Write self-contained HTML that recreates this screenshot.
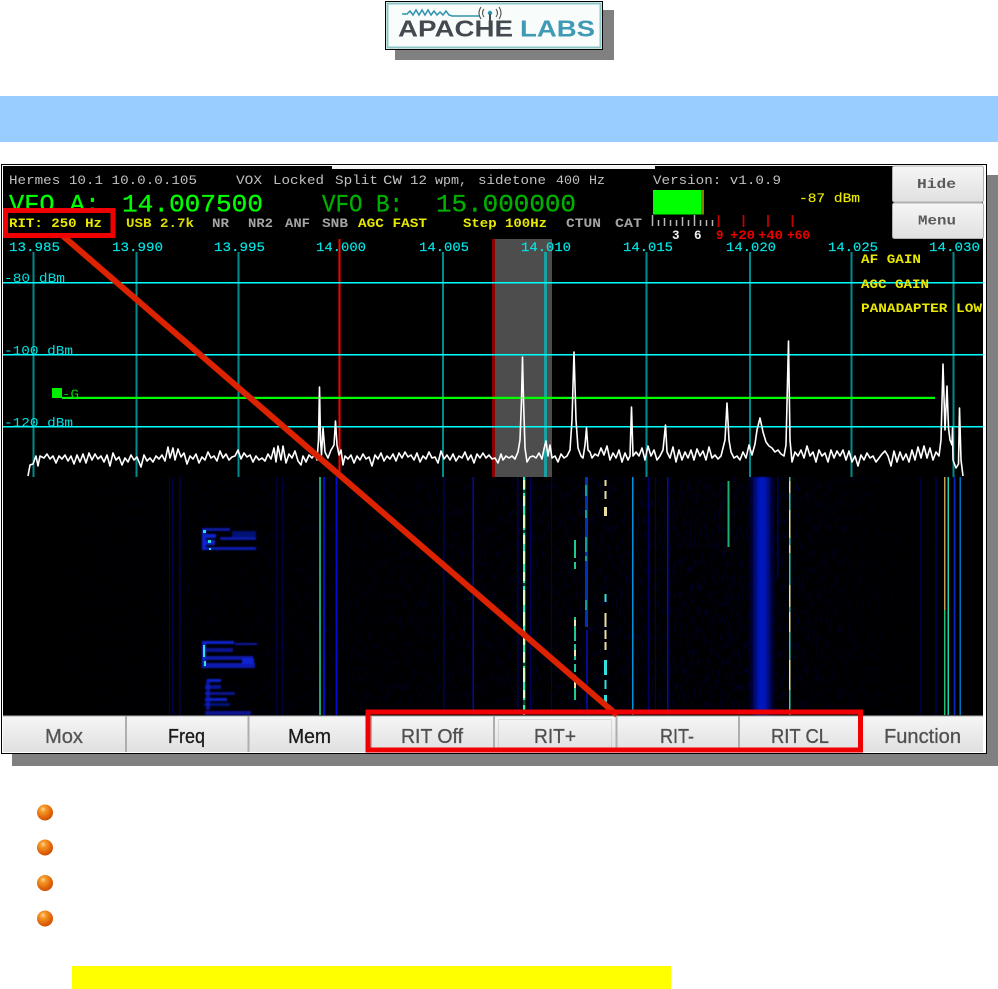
<!DOCTYPE html>
<html lang="en"><head><meta charset="utf-8"><title>RIT</title>
<style>
html,body{margin:0;padding:0;background:#fff;width:998px;height:989px;overflow:hidden}
svg{display:block}
.m{font-family:"Liberation Mono",monospace}
.b{font-weight:bold}
.s{font-family:"Liberation Sans",sans-serif}
</style></head><body>
<svg width="998" height="989" viewBox="0 0 998 989" xmlns="http://www.w3.org/2000/svg">
<defs>
<linearGradient id="btn" x1="0" y1="0" x2="0" y2="1"><stop offset="0" stop-color="#f6f6f6"/><stop offset="1" stop-color="#e0e0e0"/></linearGradient>
<radialGradient id="ball" cx=".38" cy=".3" r=".8"><stop offset="0" stop-color="#ffd8a0"/><stop offset=".22" stop-color="#f59a28"/><stop offset=".65" stop-color="#e26408"/><stop offset="1" stop-color="#bf4400"/></radialGradient>
<linearGradient id="wband" x1="0" y1="0" x2="1" y2="0"><stop offset="0" stop-color="#000050" stop-opacity="0"/><stop offset=".25" stop-color="#000a70"/><stop offset=".42" stop-color="#0418c0"/><stop offset=".58" stop-color="#0418c0"/><stop offset=".75" stop-color="#000a70"/><stop offset="1" stop-color="#000050" stop-opacity="0"/></linearGradient>
<linearGradient id="wdim" x1="0" y1="0" x2="1" y2="0"><stop offset="0" stop-color="#000" stop-opacity="1"/><stop offset=".2" stop-color="#000" stop-opacity=".75"/><stop offset=".78" stop-color="#000" stop-opacity=".35"/><stop offset=".93" stop-color="#000" stop-opacity=".85"/><stop offset="1" stop-color="#000" stop-opacity="1"/></linearGradient>
<filter id="blur" x="-2%" y="-2%" width="104%" height="104%"><feGaussianBlur stdDeviation=".35"/></filter>
<filter id="blur2" x="-10%" y="-10%" width="120%" height="120%"><feGaussianBlur stdDeviation=".7"/></filter>
<filter id="noise" x="0" y="0" width="100%" height="100%"><feTurbulence type="fractalNoise" baseFrequency=".5 .12" numOctaves="2" seed="5"/><feColorMatrix type="matrix" values="0 0 0 0 0  0 0 0 0 0  0 0 0 0 .4  1.2 0 0 0 -.6"/></filter>
</defs>

<!-- logo -->
<rect x="395" y="10" width="219" height="50" fill="#808080"/>
<rect x="385.500" y="1.500" width="217" height="48" fill="#f8fcfa" stroke="#000"/>
<rect x="387.500" y="3.500" width="213" height="44" fill="none" stroke="#8cc6c8" stroke-width="2"/>
<g filter="url(#blur)">
<path d="M402 14H407L410 11L413 15L416 10L419 15L422 10L425 15L428 10L431 15L434 11L437 15L440 12L443 15L446 11L449 15L452 16H480" fill="none" stroke="#2f93ad" stroke-width="1.500"/>
<circle cx="490" cy="13" r="2.200" fill="#2f93ad"/><rect x="489" y="14" width="2" height="8" fill="#444b50"/>
<path d="M484 9Q481 13 484 17M481 7Q477 13 481 19M496 9Q499 13 496 17M499 7Q503 13 499 19" fill="none" stroke="#555" stroke-width="1.100"/>
<text class="s b" x="398" y="36.500" font-size="23" textLength="115" lengthAdjust="spacingAndGlyphs" fill="#434a50">APACHE</text>
<text class="s b" x="520" y="36.500" font-size="23" textLength="75" lengthAdjust="spacingAndGlyphs" fill="#3f9ab5">LABS</text>
</g>

<!-- blue band -->
<rect x="0" y="96" width="998" height="46" fill="#99ccff"/>

<!-- screenshot frame -->
<rect x="12" y="175" width="986" height="591" fill="#808080"/>
<rect x="1.500" y="164.500" width="985" height="589" fill="#fff" stroke="#000"/>
<rect x="3" y="166" width="980" height="550" fill="#000"/>
<rect x="332" y="166" width="323" height="3" fill="#f2f2f2"/>

<!-- waterfall -->
<g>
<rect x="3" y="477" width="980" height="238" filter="url(#noise)"/>
<rect x="3" y="477" width="980" height="238" fill="url(#wdim)"/>
<g filter="url(#blur)">
<g fill="#000060">
<rect x="169" y="477" width="1" height="238"/><rect x="172" y="477" width="1" height="238" opacity=".7"/><rect x="179" y="477" width="1.500" height="238"/><rect x="276" y="477" width="1" height="238" opacity=".6"/><rect x="282" y="477" width="1" height="238" opacity=".6"/><rect x="443" y="477" width="1.500" height="238"/><rect x="517" y="477" width="1.500" height="238"/><rect x="530" y="477" width="1" height="238"/><rect x="551" y="477" width="1" height="238"/><rect x="648" y="477" width="1.500" height="238"/><rect x="655" y="477" width="1" height="238"/><rect x="777" y="477" width="1.500" height="100"/><rect x="920" y="477" width="1" height="238" opacity=".6"/><rect x="935" y="477" width="2" height="238" opacity=".6"/>
</g>
<rect x="319" y="477" width="2" height="238" fill="#18a878"/>
<rect x="323" y="477" width="2" height="238" fill="#0008c0"/>
<rect x="335.500" y="477" width="2" height="238" fill="#0010d0"/>
<rect x="472.500" y="477" width="1.500" height="238" fill="#0010a0"/>
<!-- 524 dashes -->
<g fill="#30f0c0"><rect x="523" y="477" width="2.200" height="238"/><path fill="#d8ffc0" d="M523 480h2.200v9h-2.200zM523 496h2.200v10h-2.200zM523 515h2.200v13h-2.200zM523 535h2.200v9h-2.200zM523 551h2.200v13h-2.200zM523 572h2.200v9h-2.200zM523 590h2.200v15h-2.200zM523 612h2.200v14h-2.200zM523 631h2.200v14h-2.200zM523 652h2.200v10h-2.200zM523 668h2.200v14h-2.200zM523 690h2.200v8h-2.200z"/></g>
<path fill="#000" d="M523 490h2.200v3h-2.200zM523 530h2.200v3h-2.200zM523 583h2.200v3h-2.200zM523 663h2.200v3h-2.200zM523 700h2.200v5h-2.200z" opacity=".7"/>
<!-- 575 -->
<path fill="#20c890" d="M574 540h2v18h-2zM574 562h2v7h-2zM574 617h2v24h-2zM574 644h2v16h-2zM574 664h2v8h-2zM574 675h2v25h-2z"/>
<path fill="#f0e8b0" d="M574 620h2v6h-2zM574 650h2v6h-2zM574 680h2v8h-2z"/>
<!-- 586 -->
<path fill="#0030b8" d="M585 477h3v150h-3z"/>
<path fill="#10a0a0" d="M585 485h2v11h-2zM585 510h2v8h-2zM585 537h2v15h-2zM585 556h2v5h-2zM585 600h2v10h-2z"/>
<rect x="586" y="630" width="2" height="85" fill="#001090"/>
<!-- 605 -->
<path fill="#e8e0a0" d="M604.500 480h2v6h-2zM604.500 491h2v8h-2zM604 507h3v9h-3zM604.500 613h2v14h-2zM604.500 630h2v9h-2zM604.500 642h2v8h-2z"/>
<path fill="#30e0e0" d="M604.500 594h2v8h-2zM604 660h3v15h-3zM604.500 680h2v9h-2zM604 695h3v9h-3z"/>
<rect x="632" y="477" width="1.500" height="238" fill="#0090e0"/>
<rect x="667" y="477" width="1.500" height="238" fill="#0010b0"/>
<rect x="727.500" y="481" width="2" height="66" fill="#18b070"/>
</g>
<rect x="748" y="477" width="28" height="238" fill="url(#wband)" filter="url(#blur2)"/>
<g filter="url(#blur)">
<rect x="789" y="477" width="1.500" height="238" fill="#30d0c0"/>
<path fill="#e8e890" d="M789 481h1.500v12h-1.500zM789 510h1.500v28h-1.500zM789 545h1.500v8h-1.500zM789 585h1.500v22h-1.500zM789 612h1.500v20h-1.500zM789 660h1.500v30h-1.500z"/>
<rect x="944" y="477" width="1.500" height="133" fill="#c0a050"/>
<rect x="944" y="610" width="1.500" height="105" fill="#20c070"/>
<rect x="947.500" y="477" width="1.500" height="238" fill="#20d0b0"/>
<rect x="953.500" y="477" width="2" height="238" fill="#0020c0"/>
<rect x="959.500" y="477" width="1.500" height="238" fill="#0070c0"/>
</g>
<!-- CW blocks -->
<g fill="#0a20d0" filter="url(#blur2)">
<rect x="202" y="528" width="28" height="3" opacity=".8"/><rect x="202" y="534" width="14" height="4"/><rect x="203" y="540" width="12" height="5"/><rect x="202" y="547" width="54" height="3" opacity=".85"/><rect x="232" y="531" width="24" height="6" opacity=".55"/><rect x="220" y="537" width="36" height="3" opacity=".8"/><rect x="202" y="530" width="4" height="20"/>
<rect x="202" y="641" width="32" height="3"/><rect x="235" y="643" width="22" height="2" opacity=".8"/><rect x="203" y="648" width="30" height="4" opacity=".7"/><rect x="203" y="656" width="50" height="4" opacity=".8"/><rect x="203" y="663" width="52" height="5" opacity=".85"/><rect x="202" y="642" width="4" height="26"/><rect x="242" y="658" width="12" height="6"/>
<rect x="207" y="679" width="14" height="3"/><rect x="205" y="685" width="16" height="4" opacity=".7"/><rect x="205" y="692" width="30" height="3" opacity=".7"/><rect x="205" y="698" width="22" height="3"/><rect x="204" y="703" width="26" height="3" opacity=".6"/><rect x="205" y="711" width="46" height="4" opacity=".7"/><rect x="206" y="680" width="4" height="30" opacity=".7"/>
</g>
<path fill="#30e0e0" d="M203 530h3v3h-3zM208 540h3v3h-3zM209 548h2v2h-2zM203 645h2v12h-2zM204 661h2v5h-2z" filter="url(#blur)"/>
</g>

<!-- spectrum area -->
<rect x="492" y="239" width="60" height="238" fill="#4d4d4d"/>
<rect x="492" y="239" width="3" height="238" fill="#8a0000"/>
<g fill="#008c8c">
<rect x="32.500" y="252" width="2" height="225"/><rect x="135.500" y="252" width="2" height="225"/><rect x="237.500" y="252" width="2" height="225"/><rect x="442" y="252" width="2" height="225"/><rect x="645.500" y="252" width="2" height="225"/><rect x="749" y="252" width="2" height="225"/><rect x="850.500" y="252" width="2" height="225"/><rect x="952.500" y="252" width="2" height="225"/>
</g>
<rect x="544" y="252" width="3" height="225" fill="#1aa0a0"/>
<rect x="338.500" y="239" width="2" height="238" fill="#ff0000"/>
<g fill="#00ffff">
<rect x="3" y="282" width="980" height="1.500"/><rect x="3" y="354" width="980" height="1.500"/><rect x="3" y="426" width="980" height="1.500"/>
</g>
<rect x="62" y="396.800" width="873" height="2.200" fill="#00ff00"/>
<rect x="52" y="388" width="10" height="10" fill="#00f000"/>
<g filter="url(#blur)">
<text class="m" x="62" y="398" font-size="12.500" textLength="17" lengthAdjust="spacingAndGlyphs" fill="#00d000">-G</text>
<g class="m" font-size="12.500" fill="#00e0e0">
<text x="4" y="282" textLength="61" lengthAdjust="spacingAndGlyphs">-80 dBm</text>
<text x="4" y="354.500" textLength="69" lengthAdjust="spacingAndGlyphs">-100 dBm</text>
<text x="4" y="426.500" textLength="69" lengthAdjust="spacingAndGlyphs">-120 dBm</text>
</g>
<polyline fill="none" stroke="#ffffff" stroke-width="1.600" stroke-linejoin="round" points="28,476 30,465 33,464 36,456 38,466 40,456 44,458 47,454 50,459 53,456 56,463 59,456 62,459 65,455 68,461 71,456 74,464 77,455 80,462 83,454 86,463 89,453 92,460 95,454 98,459 101,456 104,462 107,455 110,466 113,453 116,460 119,457 122,465 125,458 128,462 131,455 134,460 137,457 141,467 144,455 147,461 150,458 153,462 156,456 159,459 162,455 165,461 168,447 170,458 173,448 175,460 178,449 181,457 184,453 187,464 190,456 193,459 196,454 199,463 202,457 205,460 208,452 211,458 214,456 217,461 220,451 223,458 226,454 229,460 232,457 235,456 238,450 241,459 244,453 247,457 250,455 253,462 256,456 259,460 262,458 265,461 268,454 271,459 274,448 276,462 278,446 281,460 283,446 286,463 289,454 292,458 295,451 298,461 301,465 303,456 306,462 309,455 312,458 315,454 317,460 318.500,440 319.500,387 320.500,440 321.500,455 323,428 325,452 328,458 331,450 334,445 335.500,421 337,445 339,455 341,450 343,465 345,456 348,459 351,455 354,463 357,456 360,460 363,454 366,459 369,457 372,466 375,455 378,459 381,453 384,461 387,456 390,459 393,454 396,461 399,453 402,458 405,452 408,457 411,455 414,460 417,453 420,462 423,456 426,459 429,452 432,458 435,457 438,463 441,451 444,459 447,455 450,460 453,454 456,461 459,456 462,458 465,452 468,460 471,455 474,463 477,454 480,458 483,453 486,458 489,455 492,459 495,458 498,463 501,454 503,460 506,456 509,458 512,456 515,459 518,452 520,440 521.500,400 522.500,357 523.500,400 525,448 527,462 530,457 533,456 536,458 539,453 542,459 544,449 546,441 548,456 550,445 552,458 555,456 558,462 561,454 564,458 567,456 570,450 572,420 574,352 576,420 578,448 581,456 583,458 585,445 586.500,428 588,450 590,452 592,458 595,454 598,456 601,448 604,455 607,446 610,460 613,453 616,458 619,450 622,462 625,453 628,460 630,456 631.500,407 633,456 636,452 639,456 642,448 645,460 648,446 651,456 654,450 657,460 660,456 663,450 665.500,425 667,452 670,458 673,447 676,462 679,450 682,460 685,452 688,458 691,450 694,460 697,449 700,456 703,451 706,460 709,447 712,458 715,455 718,459 721,456 725,440 727,403 729,440 731,452 734,458 737,456 740,460 743,452 746,458 749,445 752,455 755,444 757,430 760,418 763,432 766,442 769,446 772,448 775,452 778,450 781,454 784,456 786,445 788.500,341 790,440 792,462 795,452 798,456 801,450 804,458 807,446 810,456 813,452 816,462 819,450 822,456 825,453 828,462 831,450 834,458 837,451 840,456 843,450 846,460 849,451 852,462 855,456 858,466 861,455 864,460 867,453 870,458 873,456 876,462 879,458 882,454 885,451 888,456 891,466 894,451 897,462 900,452 903,460 906,454 909,462 912,450 915,460 918,447 921,458 924,446 927,458 930,448 933,460 936,452 939,456 941,440 943,364 945,430 947,386 948.500,428 950,440 952,445 952.500,428 953,460 956,468 958.500,464 959.500,408 961,460 963,476"/>
</g>

<!-- header text -->
<g filter="url(#blur)">
<g class="m" font-size="12.500" fill="#c0c0c0">
<text x="9" y="184" textLength="188" lengthAdjust="spacingAndGlyphs">Hermes 10.1 10.0.0.105</text>
<text x="236" y="184" textLength="26" lengthAdjust="spacingAndGlyphs">VOX</text>
<text x="273" y="184" textLength="51" lengthAdjust="spacingAndGlyphs">Locked</text>
<text x="335" y="184" textLength="43" lengthAdjust="spacingAndGlyphs">Split</text>
<text x="383" y="184" textLength="19" lengthAdjust="spacingAndGlyphs">CW</text>
<text x="410" y="184" textLength="17" lengthAdjust="spacingAndGlyphs">12</text>
<text x="435" y="184" textLength="32" lengthAdjust="spacingAndGlyphs">wpm,</text>
<text x="478" y="184" textLength="68" lengthAdjust="spacingAndGlyphs">sidetone</text>
<text x="556" y="184" textLength="24" lengthAdjust="spacingAndGlyphs">400</text>
<text x="589" y="184" textLength="16" lengthAdjust="spacingAndGlyphs">Hz</text>
<text x="653" y="184" textLength="128" lengthAdjust="spacingAndGlyphs">Version: v1.0.9</text>
</g>
<g class="m" font-size="25" stroke-width=".3">
<text x="9" y="211.500" textLength="91" lengthAdjust="spacingAndGlyphs" fill="#00ff00" stroke="#00ff00">VFO A:</text>
<text x="122" y="211.500" textLength="141" lengthAdjust="spacingAndGlyphs" fill="#00ff00" stroke="#00ff00">14.007500</text>
<text x="322" y="211.500" textLength="81" lengthAdjust="spacingAndGlyphs" fill="#00b000" stroke="#00b000">VFO B:</text>
<text x="436" y="211.500" textLength="140" lengthAdjust="spacingAndGlyphs" fill="#00b000" stroke="#00b000">15.000000</text>
</g>
<g class="m b" font-size="12.500" fill="#e8e800">
<text x="9" y="227" textLength="93" lengthAdjust="spacingAndGlyphs">RIT: 250 Hz</text>
<text x="126" y="227" textLength="68" lengthAdjust="spacingAndGlyphs" fill="#dcdc00">USB 2.7k</text>
<text x="358" y="227" textLength="69" lengthAdjust="spacingAndGlyphs">AGC FAST</text>
<text x="463" y="227" textLength="84" lengthAdjust="spacingAndGlyphs">Step 100Hz</text>
<text x="861" y="263" textLength="60" lengthAdjust="spacingAndGlyphs">AF GAIN</text>
<text x="861" y="288" textLength="68" lengthAdjust="spacingAndGlyphs">AGC GAIN</text>
<text x="861" y="312" textLength="121" lengthAdjust="spacingAndGlyphs">PANADAPTER LOW</text>
</g>
<g class="m b" font-size="12.500" fill="#a4a4a4">
<text x="212" y="227" textLength="17" lengthAdjust="spacingAndGlyphs">NR</text>
<text x="248" y="227" textLength="25" lengthAdjust="spacingAndGlyphs">NR2</text>
<text x="285" y="227" textLength="25" lengthAdjust="spacingAndGlyphs">ANF</text>
<text x="322" y="227" textLength="26" lengthAdjust="spacingAndGlyphs">SNB</text>
<text x="566" y="227" textLength="35" lengthAdjust="spacingAndGlyphs">CTUN</text>
<text x="615" y="227" textLength="27" lengthAdjust="spacingAndGlyphs">CAT</text>
</g>
<g class="m" font-size="12.500" fill="#00e8e8" stroke="#00e8e8" stroke-width=".15">
<text x="9" y="251" textLength="51" lengthAdjust="spacingAndGlyphs">13.985</text>
<text x="112" y="251" textLength="51" lengthAdjust="spacingAndGlyphs">13.990</text>
<text x="214" y="251" textLength="51" lengthAdjust="spacingAndGlyphs">13.995</text>
<text x="316" y="251" textLength="50" lengthAdjust="spacingAndGlyphs">14.000</text>
<text x="419" y="251" textLength="50" lengthAdjust="spacingAndGlyphs">14.005</text>
<text x="521" y="251" textLength="50" lengthAdjust="spacingAndGlyphs">14.010</text>
<text x="623" y="251" textLength="50" lengthAdjust="spacingAndGlyphs">14.015</text>
<text x="726" y="251" textLength="50" lengthAdjust="spacingAndGlyphs">14.020</text>
<text x="828" y="251" textLength="50" lengthAdjust="spacingAndGlyphs">14.025</text>
<text x="929" y="251" textLength="51" lengthAdjust="spacingAndGlyphs">14.030</text>
</g>
<text class="m" x="799" y="202" font-size="12.500" textLength="61" lengthAdjust="spacingAndGlyphs" fill="#e8e800" stroke="#e8e800" stroke-width=".15">-87 dBm</text>
<!-- meter -->
<rect x="653" y="190" width="48" height="24.500" fill="#00ff00"/>
<rect x="701" y="190" width="3" height="24.500" fill="#808000"/>
<path d="M652.500 215v11M658.500 220v6M664.500 218v8M670.500 220v6M676.500 220v6M682.500 217v9M688.500 220v6M694.500 215v11M700.500 220v6M706.500 220v6M712.500 220v6" stroke="#b8b8b8" stroke-width="1.500" fill="none"/>
<path d="M718.500 215v12M743.500 215v12M768 215v12M792.500 215v12" stroke="#c80000" stroke-width="1.700" fill="none"/>
<g class="m b" font-size="12.500">
<text x="672" y="239" fill="#f0f0f0">3</text><text x="694" y="239" fill="#f0f0f0">6</text>
<text x="716" y="239" fill="#e80000">9</text>
<text x="730" y="239" textLength="25" lengthAdjust="spacingAndGlyphs" fill="#e80000">+20</text>
<text x="758" y="239" textLength="25" lengthAdjust="spacingAndGlyphs" fill="#e80000">+40</text>
<text x="787" y="239" textLength="23" lengthAdjust="spacingAndGlyphs" fill="#e80000">+60</text>
</g>
</g>

<!-- hide/menu buttons -->
<rect x="892.500" y="166" width="91" height="36" rx="2" fill="url(#btn)" stroke="#b0b0b0"/>
<rect x="892.500" y="203" width="91" height="35.500" rx="2" fill="url(#btn)" stroke="#b0b0b0"/>
<g class="m b" font-size="13.500" fill="#5a5a5a" filter="url(#blur)">
<text x="917" y="188" textLength="39" lengthAdjust="spacingAndGlyphs">Hide</text>
<text x="918" y="224.500" textLength="38" lengthAdjust="spacingAndGlyphs">Menu</text>
</g>

<!-- bottom buttons -->
<rect x="3" y="716" width="980" height="36" fill="url(#btn)"/>
<g fill="#aeaeae"><rect x="3" y="715.500" width="980" height="1"/><rect x="125" y="716" width="2" height="36"/><rect x="247.500" y="716" width="2" height="36"/><rect x="370" y="716" width="2" height="36"/><rect x="493" y="716" width="2" height="36"/><rect x="615.500" y="716" width="2" height="36"/><rect x="738" y="716" width="2" height="36"/></g>
<rect x="498.500" y="719.500" width="113" height="31" fill="none" stroke="#bdbdbd" stroke-dasharray="1 1"/>
<g class="s" font-size="20" filter="url(#blur)" stroke-width=".3">
<text x="45" y="743" textLength="38" lengthAdjust="spacingAndGlyphs" fill="#555" stroke="#555">Mox</text>
<text x="168" y="743" textLength="37" lengthAdjust="spacingAndGlyphs" fill="#1a1a1a" stroke="#1a1a1a">Freq</text>
<text x="288" y="743" textLength="43" lengthAdjust="spacingAndGlyphs" fill="#1a1a1a" stroke="#1a1a1a">Mem</text>
<text x="401" y="743" textLength="62" lengthAdjust="spacingAndGlyphs" fill="#505050" stroke="#505050">RIT Off</text>
<text x="534" y="743" textLength="42" lengthAdjust="spacingAndGlyphs" fill="#505050" stroke="#505050">RIT+</text>
<text x="660" y="743" textLength="34" lengthAdjust="spacingAndGlyphs" fill="#505050" stroke="#505050">RIT-</text>
<text x="771" y="743" textLength="58" lengthAdjust="spacingAndGlyphs" fill="#505050" stroke="#505050">RIT CL</text>
<text x="884" y="743" textLength="77" lengthAdjust="spacingAndGlyphs" fill="#505050" stroke="#505050">Function</text>
</g>

<!-- annotations -->
<line x1="63" y1="236" x2="617" y2="715" stroke="#dd2200" stroke-width="6"/>
<rect x="5.500" y="210.500" width="107.500" height="25" fill="none" stroke="#f00000" stroke-width="5"/>
<rect x="368" y="712" width="492.500" height="38" fill="none" stroke="#f00000" stroke-width="5"/>

<!-- bullets -->
<circle cx="45" cy="812.500" r="8" fill="url(#ball)"/>
<circle cx="45" cy="847.500" r="8" fill="url(#ball)"/>
<circle cx="45" cy="883" r="8" fill="url(#ball)"/>
<circle cx="45" cy="918.500" r="8" fill="url(#ball)"/>

<rect x="72" y="966" width="599" height="23" fill="#ffff00"/>
</svg>
</body></html>
